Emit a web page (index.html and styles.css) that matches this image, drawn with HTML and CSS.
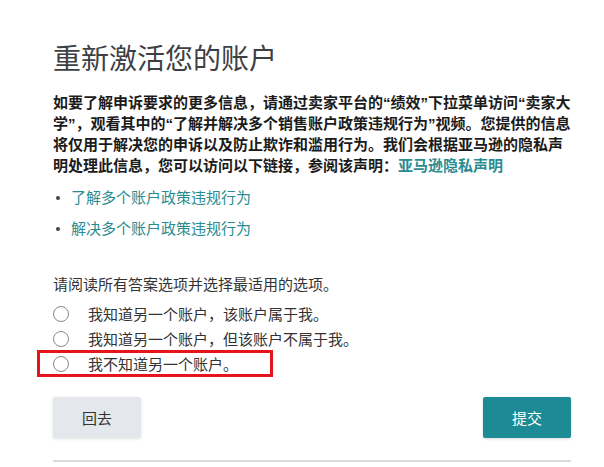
FILE: index.html
```html
<!DOCTYPE html>
<html lang="zh-CN">
<head>
<meta charset="utf-8">
<title>重新激活您的账户</title>
<link rel="stylesheet" href="styles.css">
</head>
<body>
<main class="page">
  <h1 class="title">重新激活您的账户</h1>
  <p class="intro">如要了解申诉要求的更多信息，请通过卖家平台的“绩效”下拉菜单访问“卖家大学”，观看其中的“了解并解决多个销售账户政策违规行为”视频。您提供的信息将仅用于解决您的申诉以及防止欺诈和滥用行为。我们会根据亚马逊的隐私声明处理此信息，您可以访问以下链接，参阅该声明：<a class="link" href="#">亚马逊隐私声明</a></p>
  <ul class="links">
    <li class="links-item"><a class="link" href="#">了解多个账户政策违规行为</a></li>
    <li class="links-item"><a class="link" href="#">解决多个账户政策违规行为</a></li>
  </ul>
  <p class="prompt">请阅读所有答案选项并选择最适用的选项。</p>
  <div class="options">
    <label class="option"><span class="radio"></span><span class="option-text">我知道另一个账户，该账户属于我。</span></label>
    <label class="option"><span class="radio"></span><span class="option-text">我知道另一个账户，但该账户不属于我。</span></label>
    <label class="option option-marked"><span class="radio"></span><span class="option-text">我不知道另一个账户。</span></label>
  </div>
  <div class="actions">
    <button class="btn btn-back" type="button">回去</button>
    <button class="btn btn-submit" type="button">提交</button>
  </div>
  <hr class="divider">
</main>
</body>
</html>
```

FILE: styles.css
```css
html, body {
  margin: 0;
  padding: 0;
  background: #ffffff;
}

body {
  font-family: "Liberation Sans", "Noto Sans CJK SC", sans-serif;
  color: #222;
}

.page {
  width: 518px;
  padding: 43px 0 0 53px;
}

.title {
  margin: 0;
  font-size: 28px;
  line-height: 34px;
  font-weight: 400;
  color: #3d4043;
}

.intro {
  margin: 15px 0 0;
  width: 520px;
  font-size: 15px;
  line-height: 21px;
  font-weight: 700;
  color: #1b1b1b;
}

.link {
  color: #2a8c90;
  text-decoration: none;
}

.intro .link {
  display: inline-block;
  font-weight: 700;
  line-height: 21px;
}

.links {
  list-style: none;
  margin: 11px 0 0;
  padding: 0;
}

.links-item {
  display: flex;
  align-items: center;
  font-size: 15px;
  line-height: 21px;
  margin-bottom: 10px;
}

.links-item::before {
  content: "";
  width: 4px;
  height: 4px;
  border-radius: 50%;
  background: #444;
  margin: 0 11px 0 3px;
}

.prompt {
  margin: 35px 0 0;
  font-size: 15px;
  line-height: 21px;
  color: #333;
}

.options {
  margin-top: 6px;
  display: flex;
  flex-direction: column;
}

.option {
  display: flex;
  align-items: center;
  height: 25px;
  font-size: 15px;
  color: #333;
}

.radio {
  width: 16px;
  height: 16px;
  box-sizing: border-box;
  border: 1.5px solid #85888b;
  border-radius: 50%;
  margin-right: 19px;
  flex: none;
}

.option-marked {
  box-sizing: border-box;
  height: 27px;
  width: 236px;
  margin: -1px 0 -1px -16px;
  padding-left: 13px;
  border: 3px solid #e8141b;
}

.actions {
  display: flex;
  justify-content: space-between;
  margin-top: 21px;
}

.btn {
  width: 88px;
  height: 41px;
  border: none;
  border-radius: 2px;
  font-family: inherit;
  font-size: 15px;
  cursor: pointer;
}

.btn-back {
  background: #e4e7eb;
  color: #333;
  box-shadow: 0 1px 3px rgba(0, 0, 0, 0.12);
}

.btn-submit {
  background: #1d8b95;
  color: #ffffff;
  box-shadow: 0 1px 3px rgba(0, 0, 0, 0.15);
}

.divider {
  margin: 22px 0 0;
  border: none;
  height: 2px;
  background: #dcdcdc;
}
```
